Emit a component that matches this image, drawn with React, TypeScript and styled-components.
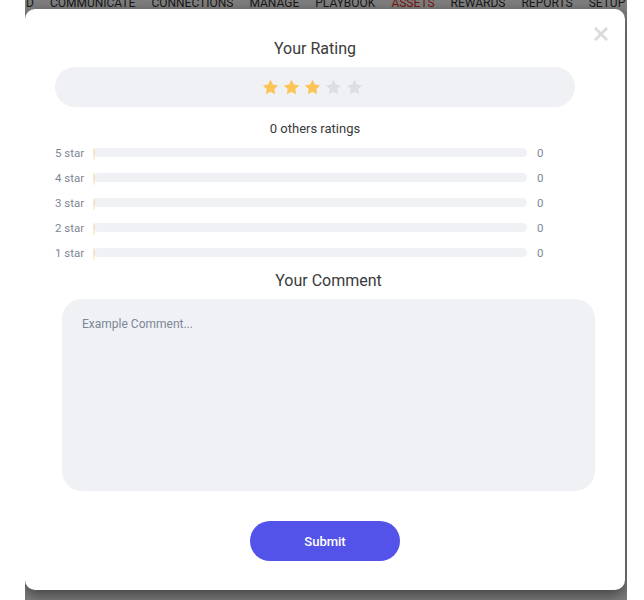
import React from "react";
import styled, { createGlobalStyle } from "styled-components";

const Global = createGlobalStyle`
  html, body { margin: 0; padding: 0; background: #ffffff; }
  body { font-family: Roboto, "Liberation Sans", sans-serif; }
  * { box-sizing: border-box; }
`;

const Viewport = styled.div`
  width: 644px;
  height: 600px;
  display: flex;
  padding-left: 25px;
`;

const Stage = styled.div`
  position: relative;
  width: 602px;
  height: 600px;
  overflow: hidden;
  background: #ffffff;
`;

const NavBar = styled.nav`
  display: flex;
  gap: 16px;
  margin-top: -4px;
  padding-left: 1px;
  font-family: Roboto, "Liberation Sans", sans-serif;
  font-size: 12px;
  line-height: 14px;
  white-space: nowrap;
`;

const NavItem = styled.span<{ $active?: boolean }>`
  color: ${(p) => (p.$active ? "#e8321c" : "#333333")};
  text-transform: uppercase;
`;

const Backdrop = styled.div`
  position: absolute;
  inset: 0;
  background: rgba(0, 0, 0, 0.5);
`;

const Modal = styled.div`
  position: absolute;
  top: 9px;
  left: 0;
  width: 600px;
  background: #ffffff;
  border-radius: 10px;
  box-shadow: 0 5px 15px rgba(0, 0, 0, 0.5);
  display: flex;
  flex-direction: column;
  padding: 30px 0 29px;
  color: #3a3a3a;
`;

const CloseButton = styled.button`
  position: absolute;
  top: 18px;
  right: 17px;
  width: 14px;
  height: 14px;
  padding: 0;
  border: none;
  background: none;
  display: flex;
  align-items: center;
  justify-content: center;
  cursor: pointer;
`;

const Heading = styled.h3<{ $left: number; $right: number; $top?: number }>`
  margin: ${(p) => p.$top ?? 0}px ${(p) => p.$right}px 0 ${(p) => p.$left}px;
  font-size: 16px;
  line-height: 20px;
  font-weight: 400;
  text-align: center;
  color: #3a3a3a;
`;

const StarPill = styled.div`
  margin: 8px 50px 0 30px;
  height: 40px;
  border-radius: 20px;
  background: #f0f1f5;
  display: flex;
  align-items: center;
  justify-content: center;
  gap: 4px;
  padding-right: 6px;
`;

const Summary = styled.div`
  margin: 13px 50px 0 30px;
  font-size: 13px;
  line-height: 18px;
  text-align: center;
  color: #3a3a3a;
`;

const Breakdown = styled.div`
  margin: 2px 0 0 30px;
  display: flex;
  flex-direction: column;
`;

const BreakRow = styled.div`
  display: grid;
  grid-template-columns: 38px 434px auto;
  align-items: center;
  height: 25px;
`;

const RowLabel = styled.span`
  font-size: 11.5px;
  color: #7d8796;
`;

const Track = styled.div`
  position: relative;
  height: 9px;
  border-radius: 5px;
  background: #f0f1f5;
`;

const Fill = styled.div`
  position: absolute;
  left: 0;
  top: 0;
  height: 12px;
  border-radius: 2px;
  background: rgba(251, 198, 88, 0.3);
`;

const RowCount = styled.span`
  margin-left: 10px;
  font-size: 11.5px;
  color: #7d8796;
`;

const CommentBox = styled.textarea`
  margin: 8px 30px 0 37px;
  height: 192px;
  border: none;
  border-radius: 20px;
  background: #f0f1f5;
  padding: 17px 20px;
  resize: none;
  font-family: Roboto, "Liberation Sans", sans-serif;
  font-size: 12px;
  line-height: 16px;
  color: #333333;
  outline: none;
  &::placeholder {
    color: #7d8796;
  }
`;

const SubmitButton = styled.button`
  align-self: center;
  margin-top: 30px;
  width: 150px;
  height: 40px;
  border: none;
  border-radius: 20px;
  background: #5353e9;
  color: #ffffff;
  font-family: Roboto, "Liberation Sans", sans-serif;
  font-size: 13px;
  font-weight: 500;
  padding-bottom: 1px;
  cursor: pointer;
`;

const Star = ({ filled }: { filled: boolean }) => (
  <svg width="17" height="17" viewBox="0 0 24 24">
    <path
      d="M12 1.2l3.3 6.7 7.4 1.1-5.35 5.2 1.27 7.4L12 18.1l-6.62 3.5 1.27-7.4L1.3 9l7.4-1.1z"
      fill={filled ? "#fcc455" : "#dcdee3"}
    />
  </svg>
);

const navItems = ["D", "Communicate", "Connections", "Manage", "Playbook", "Assets", "Rewards", "Reports", "Setup"];

export default function App() {
  const rating = 3;
  const rows = [5, 4, 3, 2, 1];
  return (
    <>
      <Global />
      <Viewport>
        <Stage>
          <NavBar>
            {navItems.map((n) => (
              <NavItem key={n} $active={n === "Assets"}>
                {n}
              </NavItem>
            ))}
          </NavBar>
          <Backdrop />
          <Modal>
            <CloseButton aria-label="Close">
              <svg width="14" height="14" viewBox="0 0 14 14">
                <path d="M2 2L12 12M12 2L2 12" stroke="#dcdcdc" strokeWidth="3" strokeLinecap="square" />
              </svg>
            </CloseButton>
            <Heading $left={30} $right={50}>Your Rating</Heading>
            <StarPill>
              {[1, 2, 3, 4, 5].map((i) => (
                <Star key={i} filled={i <= rating} />
              ))}
            </StarPill>
            <Summary>0 others ratings</Summary>
            <Breakdown>
              {rows.map((r) => (
                <BreakRow key={r}>
                  <RowLabel>{r} star</RowLabel>
                  <Track>
                    <Fill style={{ width: "2px" }} />
                  </Track>
                  <RowCount>0</RowCount>
                </BreakRow>
              ))}
            </Breakdown>
            <Heading $left={37} $right={30} $top={6}>
              Your Comment
            </Heading>
            <CommentBox placeholder="Example Comment..." />
            <SubmitButton>Submit</SubmitButton>
          </Modal>
        </Stage>
      </Viewport>
    </>
  );
}
